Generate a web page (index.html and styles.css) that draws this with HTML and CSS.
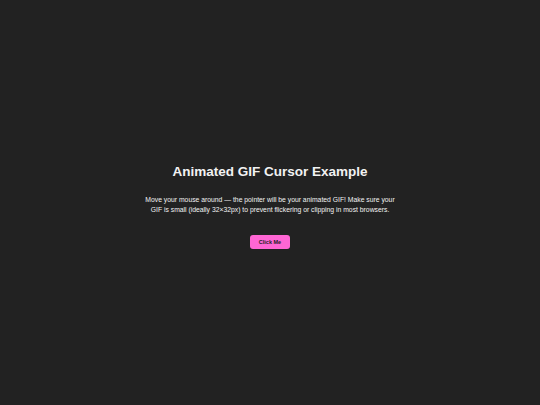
FILE: index.html
```html
<!DOCTYPE html>
<html>
<head>
<meta charset="utf-8">
<link rel="stylesheet" href="styles.css">
</head>
<body>
<main class="page">
  <h1 class="title">Animated GIF Cursor Example</h1>
  <p class="text">Move your mouse around — the pointer will be your animated GIF! Make sure your GIF is small (ideally 32×32px) to prevent flickering or clipping in most browsers.</p>
  <button class="btn">Click Me</button>
</main>
</body>
</html>
```
FILE: styles.css
```css
html, body {
  margin: 0;
  padding: 0;
  height: 100%;
  background: #222222;
}
.page {
  box-sizing: border-box;
  height: 100%;
  padding-top: 7px;
  display: flex;
  flex-direction: column;
  align-items: center;
  justify-content: center;
  font-family: "Liberation Sans", Arial, sans-serif;
  color: #f2f2f2;
  text-align: center;
}
.title {
  margin: 0 0 14px;
  font-size: 13.5px;
  font-weight: bold;
  line-height: 18px;
}
.text {
  margin: 0 0 20px;
  width: 256px;
  font-size: 6.8px;
  line-height: 10px;
}
.btn {
  font-family: "Liberation Sans", Arial, sans-serif;
  font-size: 5.5px;
  font-weight: bold;
  color: #222;
  background: #ff66d4;
  border: none;
  border-radius: 3px;
  width: 40px;
  height: 14px;
  padding: 0;
  cursor: pointer;
}
```
